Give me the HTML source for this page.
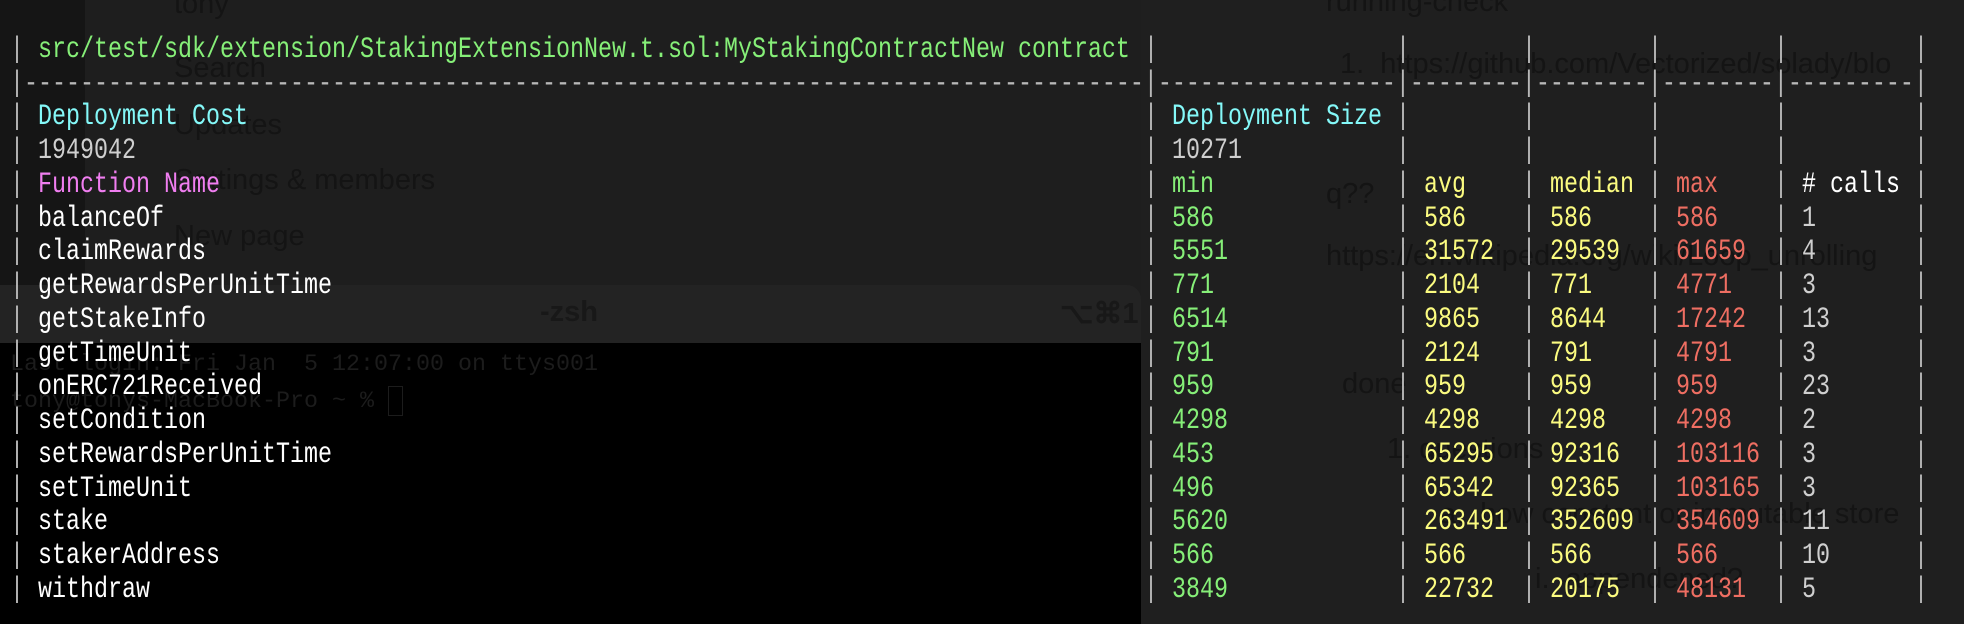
<!DOCTYPE html>
<html><head><meta charset="utf-8"><style>
html,body{margin:0;padding:0}
body{width:1964px;height:624px;position:relative;overflow:hidden;background:#1e1e1e;font-family:"Liberation Mono",monospace}
.bg{position:absolute}
.g{position:absolute;font-family:"Liberation Sans",sans-serif;color:#141414;font-size:29px;white-space:pre}
.gm{position:absolute;font-family:"Liberation Mono",monospace;color:#1c1c1c;font-size:23.33px;white-space:pre}
.r{position:absolute;left:0;width:1964px;height:34px;line-height:34px;font-size:23.33px}
.r span{position:absolute;top:0;white-space:pre;transform:scaleY(1.25);transform-origin:50% 55%}
.p{color:#b8b8b8}
.a{left:38px}.b{left:1172px}.c{left:1424px}.d{left:1550px}.e{left:1676px}.f{left:1802px}
.p0{left:10px}.p1{left:1144px}.p2{left:1396px}.p3{left:1522px}.p4{left:1648px}.p5{left:1774px}.p6{left:1914px}
.gr{color:#86ef78}.cy{color:#84f8f8}.mg{color:#f07ef0}.ye{color:#fbfb80}.rd{color:#ee6e62}.wh{color:#fff}.gy{color:#cfcfcf}
</style></head><body>
<div class="bg" style="left:0;top:0;width:85px;height:285px;background:#151515"></div>
<div class="bg" style="left:1141px;top:0;width:823px;height:624px;background:#1f1f1f"></div>
<div class="bg" style="left:0;top:285px;width:1141px;height:58px;background:#232323;border-top-right-radius:14px"></div>
<div class="bg" style="left:0;top:343px;width:1141px;height:281px;background:#000"></div>

<div class="g" style="left:174px;top:-12px">tony</div>
<div class="g" style="left:174px;top:52px">Search</div>
<div class="g" style="left:174px;top:109px">Updates</div>
<div class="g" style="left:174px;top:164px">Settings &amp; members</div>
<div class="g" style="left:174px;top:220px">New page</div>
<div class="g" style="left:540px;top:296px;font-weight:bold;color:#181818">-zsh</div>
<div class="g" style="left:1060px;top:296px;font-weight:bold;color:#181818">⌥⌘1</div>
<div class="gm" style="left:10px;top:352px">Last login: Fri Jan  5 12:07:00 on ttys001</div>
<div class="gm" style="left:10px;top:386px">tony@tonys-MacBook-Pro ~ % <span style="display:inline-block;width:13px;height:28px;border:1px solid #1c1c1c;vertical-align:middle"></span></div>

<div class="g" style="left:1326px;top:-14px">running-check</div>
<div class="g" style="left:1340px;top:48px">1.  https://github.com/Vectorized/solady/blo</div>
<div class="g" style="left:1326px;top:178px">q??</div>
<div class="g" style="left:1326px;top:240px">https://en.wikipedia.org/wiki/Loop_unrolling</div>
<div class="g" style="left:1342px;top:368px">done</div>
<div class="g" style="left:1387px;top:433px">1. questions</div>
<div class="g" style="left:1440px;top:498px">a.  how constant or immutable store</div>
<div class="g" style="left:1535px;top:563px">i.  appendened?</div>

<div class="r" style="top:34px"><span class="p p0">|</span><span class="a gr">src/test/sdk/extension/StakingExtensionNew.t.sol:MyStakingContractNew contract</span><span class="p p1">|</span><span class="p p2">|</span><span class="p p3">|</span><span class="p p4">|</span><span class="p p5">|</span><span class="p p6">|</span></div>
<div class="r" style="top:68px"><span class="p p0">|--------------------------------------------------------------------------------|-----------------|--------|--------|--------|---------|</span></div>
<div class="r" style="top:101px"><span class="p p0">|</span><span class="a cy">Deployment Cost</span><span class="p p1">|</span><span class="b cy">Deployment Size</span><span class="p p2">|</span><span class="p p3">|</span><span class="p p4">|</span><span class="p p5">|</span><span class="p p6">|</span></div>
<div class="r" style="top:135px"><span class="p p0">|</span><span class="a gy">1949042</span><span class="p p1">|</span><span class="b gy">10271</span><span class="p p2">|</span><span class="p p3">|</span><span class="p p4">|</span><span class="p p5">|</span><span class="p p6">|</span></div>
<div class="r" style="top:169px"><span class="p p0">|</span><span class="a mg">Function Name</span><span class="p p1">|</span><span class="b gr">min</span><span class="p p2">|</span><span class="c ye">avg</span><span class="p p3">|</span><span class="d ye">median</span><span class="p p4">|</span><span class="e rd">max</span><span class="p p5">|</span><span class="f wh"># calls</span><span class="p p6">|</span></div>
<div class="r" style="top:203px"><span class="p p0">|</span><span class="a wh">balanceOf</span><span class="p p1">|</span><span class="b gr">586</span><span class="p p2">|</span><span class="c ye">586</span><span class="p p3">|</span><span class="d ye">586</span><span class="p p4">|</span><span class="e rd">586</span><span class="p p5">|</span><span class="f gy">1</span><span class="p p6">|</span></div>
<div class="r" style="top:236px"><span class="p p0">|</span><span class="a wh">claimRewards</span><span class="p p1">|</span><span class="b gr">5551</span><span class="p p2">|</span><span class="c ye">31572</span><span class="p p3">|</span><span class="d ye">29539</span><span class="p p4">|</span><span class="e rd">61659</span><span class="p p5">|</span><span class="f gy">4</span><span class="p p6">|</span></div>
<div class="r" style="top:270px"><span class="p p0">|</span><span class="a wh">getRewardsPerUnitTime</span><span class="p p1">|</span><span class="b gr">771</span><span class="p p2">|</span><span class="c ye">2104</span><span class="p p3">|</span><span class="d ye">771</span><span class="p p4">|</span><span class="e rd">4771</span><span class="p p5">|</span><span class="f gy">3</span><span class="p p6">|</span></div>
<div class="r" style="top:304px"><span class="p p0">|</span><span class="a wh">getStakeInfo</span><span class="p p1">|</span><span class="b gr">6514</span><span class="p p2">|</span><span class="c ye">9865</span><span class="p p3">|</span><span class="d ye">8644</span><span class="p p4">|</span><span class="e rd">17242</span><span class="p p5">|</span><span class="f gy">13</span><span class="p p6">|</span></div>
<div class="r" style="top:338px"><span class="p p0">|</span><span class="a wh">getTimeUnit</span><span class="p p1">|</span><span class="b gr">791</span><span class="p p2">|</span><span class="c ye">2124</span><span class="p p3">|</span><span class="d ye">791</span><span class="p p4">|</span><span class="e rd">4791</span><span class="p p5">|</span><span class="f gy">3</span><span class="p p6">|</span></div>
<div class="r" style="top:371px"><span class="p p0">|</span><span class="a wh">onERC721Received</span><span class="p p1">|</span><span class="b gr">959</span><span class="p p2">|</span><span class="c ye">959</span><span class="p p3">|</span><span class="d ye">959</span><span class="p p4">|</span><span class="e rd">959</span><span class="p p5">|</span><span class="f gy">23</span><span class="p p6">|</span></div>
<div class="r" style="top:405px"><span class="p p0">|</span><span class="a wh">setCondition</span><span class="p p1">|</span><span class="b gr">4298</span><span class="p p2">|</span><span class="c ye">4298</span><span class="p p3">|</span><span class="d ye">4298</span><span class="p p4">|</span><span class="e rd">4298</span><span class="p p5">|</span><span class="f gy">2</span><span class="p p6">|</span></div>
<div class="r" style="top:439px"><span class="p p0">|</span><span class="a wh">setRewardsPerUnitTime</span><span class="p p1">|</span><span class="b gr">453</span><span class="p p2">|</span><span class="c ye">65295</span><span class="p p3">|</span><span class="d ye">92316</span><span class="p p4">|</span><span class="e rd">103116</span><span class="p p5">|</span><span class="f gy">3</span><span class="p p6">|</span></div>
<div class="r" style="top:473px"><span class="p p0">|</span><span class="a wh">setTimeUnit</span><span class="p p1">|</span><span class="b gr">496</span><span class="p p2">|</span><span class="c ye">65342</span><span class="p p3">|</span><span class="d ye">92365</span><span class="p p4">|</span><span class="e rd">103165</span><span class="p p5">|</span><span class="f gy">3</span><span class="p p6">|</span></div>
<div class="r" style="top:506px"><span class="p p0">|</span><span class="a wh">stake</span><span class="p p1">|</span><span class="b gr">5620</span><span class="p p2">|</span><span class="c ye">263491</span><span class="p p3">|</span><span class="d ye">352609</span><span class="p p4">|</span><span class="e rd">354609</span><span class="p p5">|</span><span class="f gy">11</span><span class="p p6">|</span></div>
<div class="r" style="top:540px"><span class="p p0">|</span><span class="a wh">stakerAddress</span><span class="p p1">|</span><span class="b gr">566</span><span class="p p2">|</span><span class="c ye">566</span><span class="p p3">|</span><span class="d ye">566</span><span class="p p4">|</span><span class="e rd">566</span><span class="p p5">|</span><span class="f gy">10</span><span class="p p6">|</span></div>
<div class="r" style="top:574px"><span class="p p0">|</span><span class="a wh">withdraw</span><span class="p p1">|</span><span class="b gr">3849</span><span class="p p2">|</span><span class="c ye">22732</span><span class="p p3">|</span><span class="d ye">20175</span><span class="p p4">|</span><span class="e rd">48131</span><span class="p p5">|</span><span class="f gy">5</span><span class="p p6">|</span></div>
</body></html>
